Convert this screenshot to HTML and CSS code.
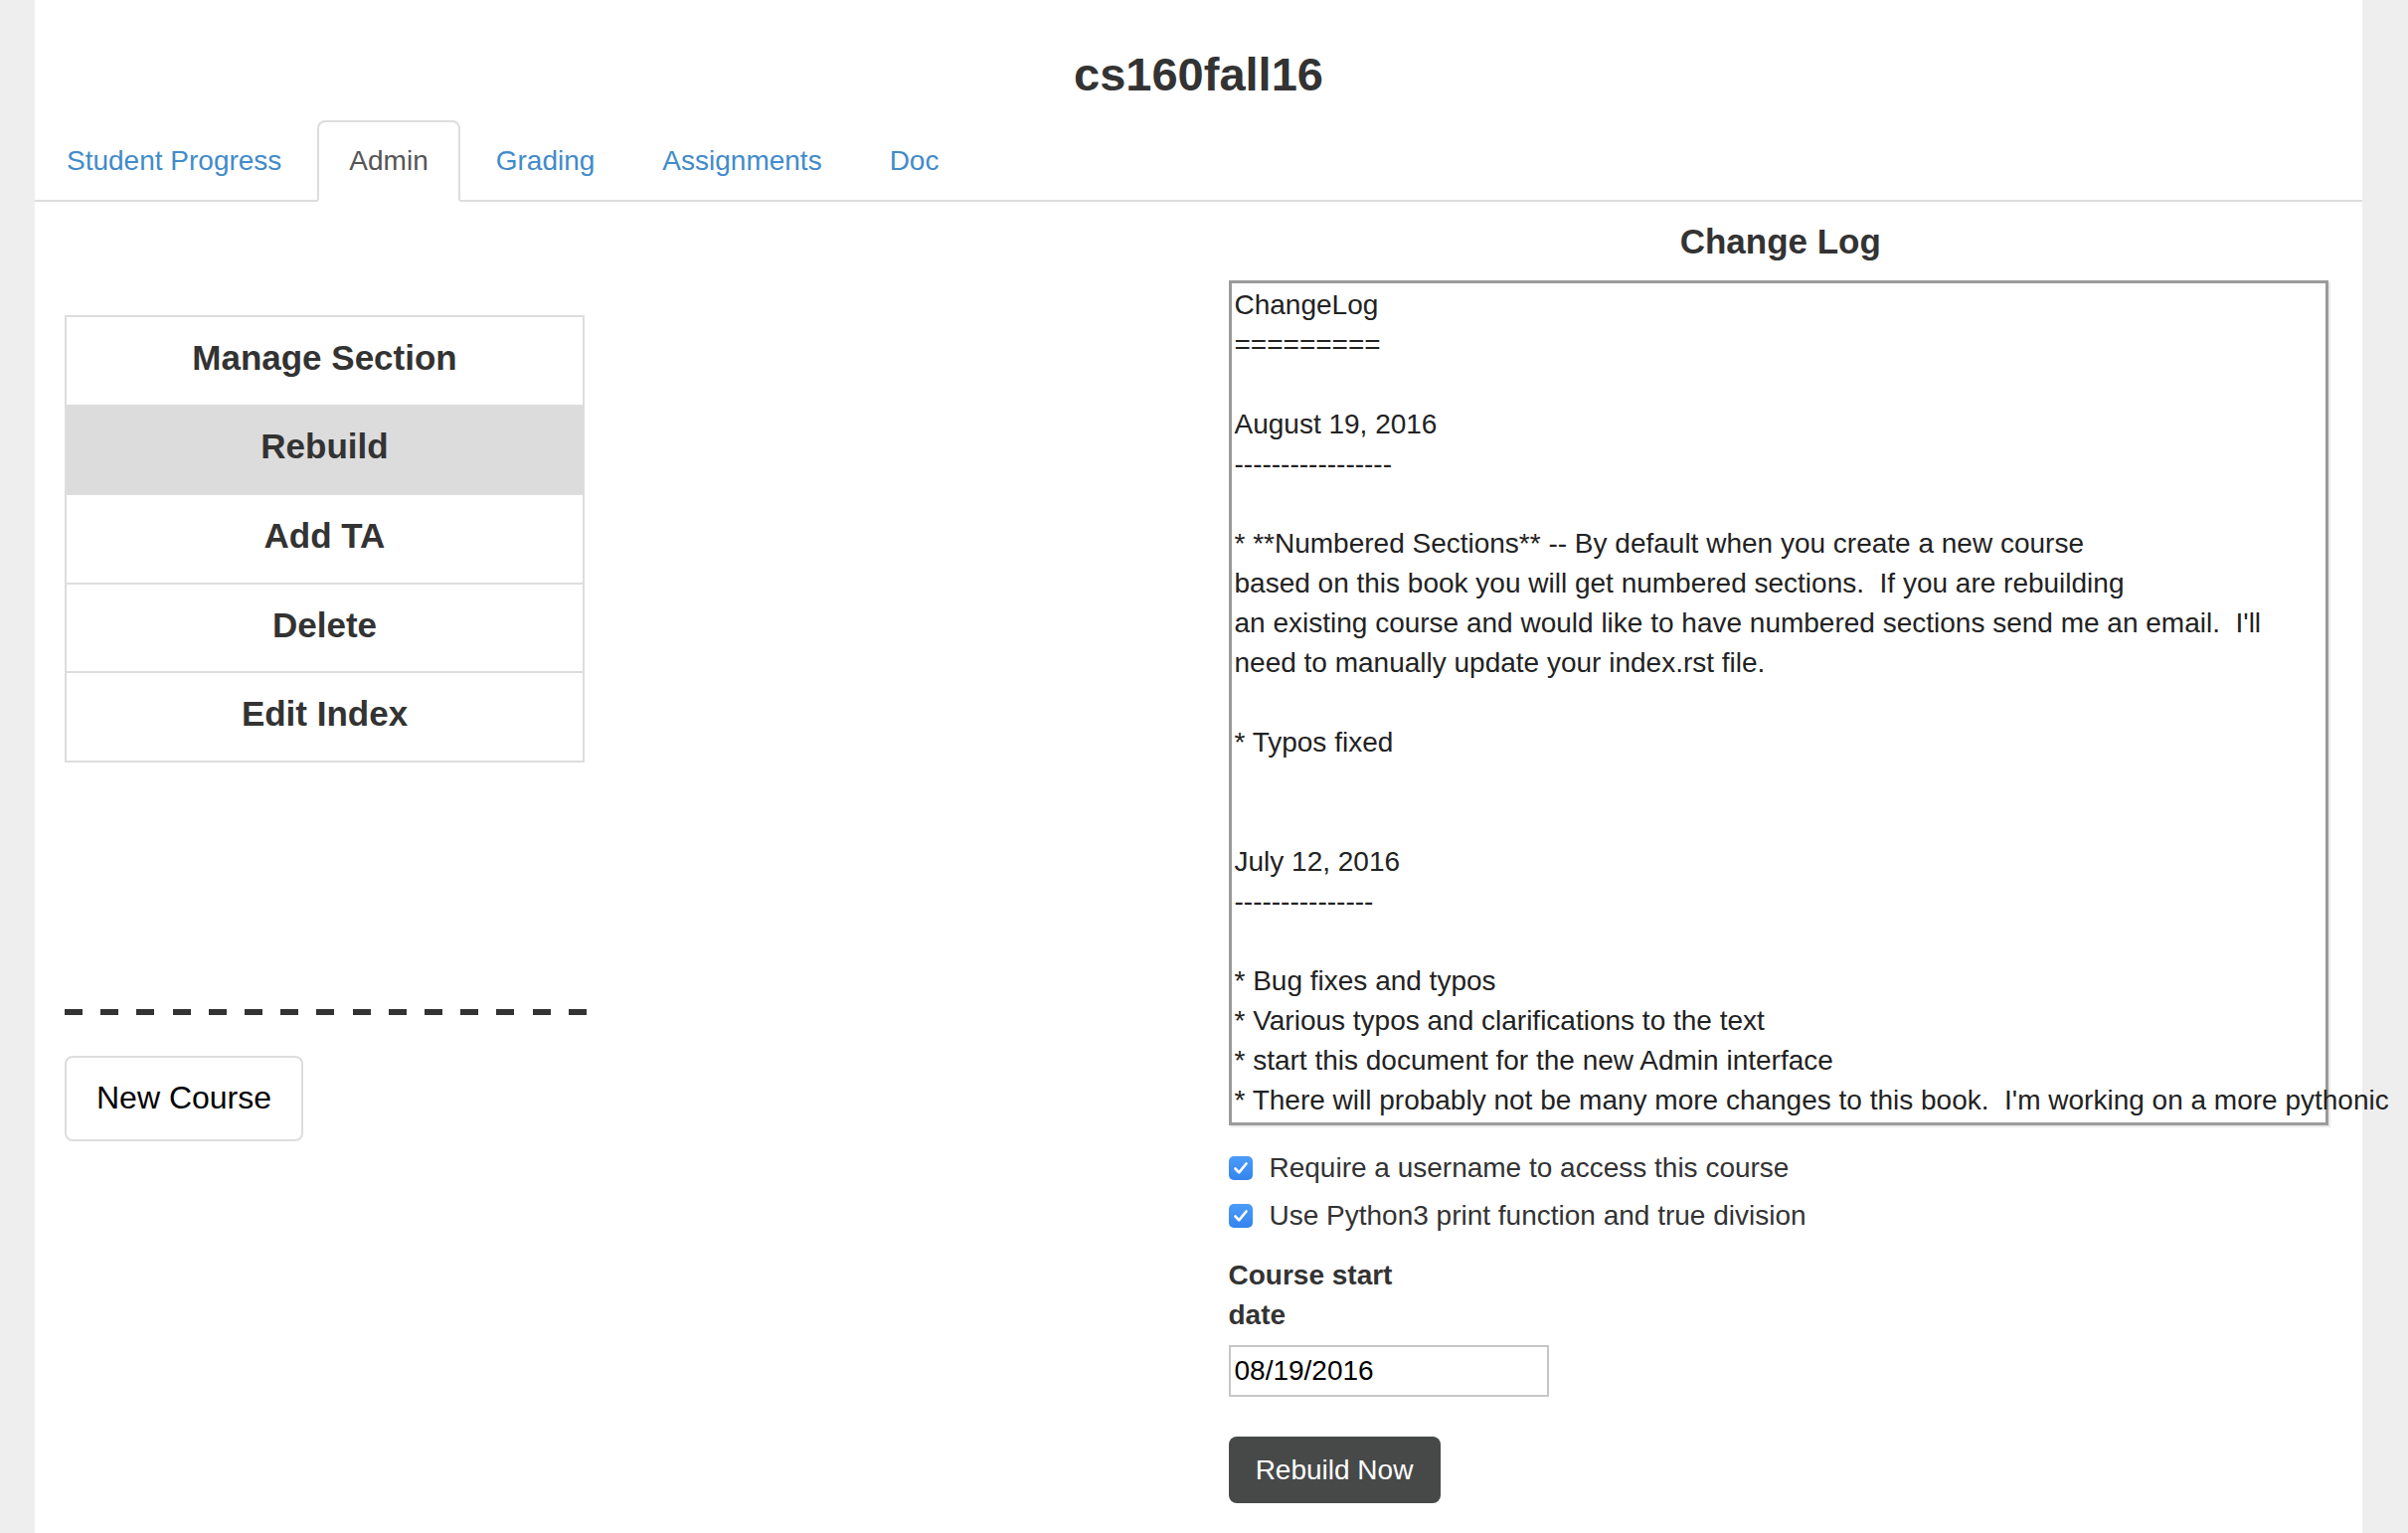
FILE: index.html
```html
<!DOCTYPE html>
<html lang="en">
<head>
<meta charset="utf-8">
<title>cs160fall16 - Admin</title>
<link rel="stylesheet" href="styles.css">
</head>
<body>
<div class="page">
  <header class="header">
    <h1 class="title">cs160fall16</h1>
  </header>
  <ul class="tabs">
    <li class="tab"><a class="tab-link">Student Progress</a></li>
    <li class="tab active"><a class="tab-link">Admin</a></li>
    <li class="tab"><a class="tab-link">Grading</a></li>
    <li class="tab"><a class="tab-link">Assignments</a></li>
    <li class="tab"><a class="tab-link">Doc</a></li>
  </ul>
  <div class="main">
    <div class="col-left">
      <div class="list">
        <div class="list-item">Manage Section</div>
        <div class="list-item selected">Rebuild</div>
        <div class="list-item">Add TA</div>
        <div class="list-item">Delete</div>
        <div class="list-item">Edit Index</div>
      </div>
      <div class="dash"></div>
      <button class="new-course" type="button">New Course</button>
    </div>
    <div class="col-right">
      <h3 class="log-title">Change Log</h3>
      <div class="log">ChangeLog
=========

August 19, 2016
-----------------

* **Numbered Sections** -- By default when you create a new course
based on this book you will get numbered sections.  If you are rebuilding
an existing course and would like to have numbered sections send me an email.  I'll
need to manually update your index.rst file.

* Typos fixed


July 12, 2016
---------------

* Bug fixes and typos
* Various typos and clarifications to the text
* start this document for the new Admin interface
* There will probably not be many more changes to this book.  I'm working on a more pythonic</div>
      <label class="check first"><span class="cb"><svg viewBox="0 0 24 24" width="24" height="24"><path d="M6.5 12.5 L10.2 16.3 L17.5 7.5" fill="none" stroke="#fff" stroke-width="2.6" stroke-linecap="round" stroke-linejoin="round"/></svg></span>Require a username to access this course</label>
      <label class="check"><span class="cb"><svg viewBox="0 0 24 24" width="24" height="24"><path d="M6.5 12.5 L10.2 16.3 L17.5 7.5" fill="none" stroke="#fff" stroke-width="2.6" stroke-linecap="round" stroke-linejoin="round"/></svg></span>Use Python3 print function and true division</label>
      <div class="date-label">Course start date</div>
      <input class="date-input" type="text" value="08/19/2016">
      <button class="rebuild" type="button">Rebuild Now</button>
    </div>
  </div>
</div>
</body>
</html>
```
FILE: styles.css
```css
html, body {
  margin: 0;
  padding: 0;
  overflow: hidden;
}
body {
  background: #eeeeee;
  font-family: "Liberation Sans", Arial, Helvetica, sans-serif;
  color: #333333;
  font-size: 28px;
  line-height: 40px;
}
.page {
  margin-left: 35px;
  width: 2341px;
  height: 1542px;
  background: #ffffff;
  box-sizing: border-box;
}
.header {
  padding-top: 49px;
  margin-bottom: 21px;
}
.title {
  margin: 0;
  text-align: center;
  font-size: 47px;
  line-height: 51px;
  font-weight: 700;
  color: #333333;
}
.tabs {
  list-style: none;
  margin: 0;
  padding: 0;
  display: flex;
  border-bottom: 2px solid #dddddd;
  height: 80px;
}
.tab {
  margin-right: 4px;
  margin-bottom: -2px;
}
.tab-link {
  display: block;
  padding: 19px 30px;
  line-height: 40px;
  border: 2px solid transparent;
  border-radius: 8px 8px 0 0;
  color: #428bca;
  cursor: pointer;
}
.tab.active .tab-link {
  color: #555555;
  background: #ffffff;
  border-color: #dddddd;
  border-bottom-color: transparent;
}
.main {
  display: grid;
  grid-template-columns: minmax(0, 1fr) minmax(0, 1fr);
  column-gap: 60px;
  padding: 0 30px;
}
.col-left {
  padding-top: 114px;
}
.list {
  width: 523px;
  border: 2px solid #dddddd;
  box-sizing: border-box;
}
.list-item {
  height: 81.6px;
  padding-bottom: 6px;
  display: flex;
  align-items: center;
  justify-content: center;
  font-size: 35px;
  font-weight: 700;
  color: #333333;
  background: #ffffff;
}
.list-item + .list-item {
  border-top: 2px solid #dddddd;
}
.list-item.selected {
  background: #dcdcdc;
}
.dash {
  margin-top: 248px;
  width: 525px;
  height: 6px;
  background: repeating-linear-gradient(90deg, #333333 0 18px, transparent 18px 36.2px);
}
.new-course {
  display: block;
  margin-top: 41px;
  width: 240px;
  height: 86px;
  border: 2px solid #dddddd;
  border-radius: 8px;
  background: #ffffff;
  font-family: "Liberation Sans", Arial, sans-serif;
  font-size: 32px;
  color: #000000;
  padding: 0;
}
.log-title {
  margin: 20px 0 19px;
  text-align: center;
  font-size: 35px;
  line-height: 40px;
  font-weight: 700;
  color: #333333;
}
.log {
  height: 842px;
  margin-right: 4px;
  border: 3px solid #9b9b9b;
  padding: 2px 3px 0;
  white-space: pre;
  overflow: visible;
  font-size: 28px;
  line-height: 40px;
  color: #222222;
  box-shadow: 2px 2px 0 #eaeaea;
}
.check {
  display: flex;
  align-items: center;
  height: 40px;
  color: #333333;
}
.check.first {
  margin-top: 23px;
}
.check + .check {
  margin-top: 8px;
}
.cb {
  width: 24px;
  height: 24px;
  margin-right: 17px;
  border-radius: 5px;
  background: linear-gradient(#4c9cf8, #3584ee);
  display: flex;
  flex: none;
}
.date-label {
  margin-top: 20px;
  width: 190px;
  font-weight: 700;
  line-height: 40px;
  color: #333333;
}
.date-input {
  display: block;
  margin: 10px 0 0;
  width: 322px;
  height: 52px;
  box-sizing: border-box;
  border: 2px solid #c6c6c6;
  padding: 0 4px;
  font-family: "Liberation Sans", Arial, sans-serif;
  font-size: 28px;
  color: #000000;
  background: #ffffff;
  outline: none;
}
.rebuild {
  display: block;
  margin-top: 40px;
  width: 213px;
  height: 67px;
  border: none;
  border-radius: 8px;
  background: #474949;
  color: #ffffff;
  font-family: "Liberation Sans", Arial, sans-serif;
  font-size: 28px;
  padding: 0;
}
```
